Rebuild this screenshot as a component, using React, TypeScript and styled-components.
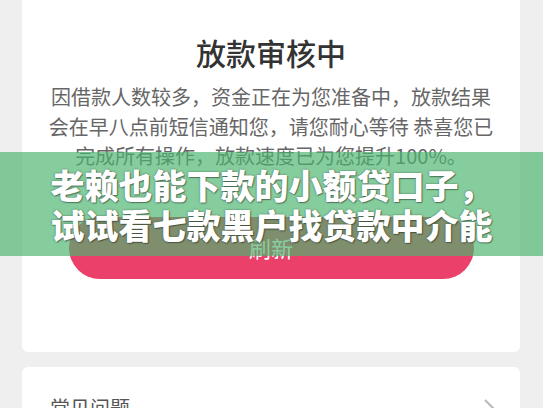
import styled, { createGlobalStyle } from 'styled-components';

const GlobalStyle = createGlobalStyle`
  body {
    margin: 0;
    background: #efefef;
    font-family: "Noto Sans CJK SC", "Noto Sans", sans-serif;
    overflow: hidden;
  }
`

const Page = styled.div`
  position: relative;
  width: 543px;
  height: 408px;
  padding: 0 23px 0 22px;
  box-sizing: border-box;
  overflow: hidden;
`

const Card = styled.div`
  background: #fff;
  border-radius: 6px;
`

const StatusCard = styled(Card)`
  margin-top: -20px;
  padding: 51px 24px 73px;
  display: flex;
  flex-direction: column;
  align-items: center;
`

const Title = styled.h1`
  margin: 0;
  font-size: 30px;
  line-height: 42px;
  font-weight: 500;
  color: #333;
`

const Desc = styled.p`
  margin: 9px 0 0;
  max-width: 450px;
  font-size: 20px;
  line-height: 29.5px;
  color: #666;
  text-align: center;
`

const RefreshButton = styled.button`
  margin-top: 46px;
  width: 405px;
  height: 62px;
  border: none;
  border-radius: 31px;
  background: #ea406a;
  color: #fff;
  font-family: inherit;
  font-size: 22px;
  padding: 0 0 2px;
`

const FaqCard = styled(Card)`
  margin-top: 15px;
  padding: 27px 25px 30px 28px;
  display: flex;
  align-items: center;
  justify-content: space-between;
`

const FaqLabel = styled.span`
  font-size: 20px;
  line-height: 28px;
  color: #555;
`

const Banner = styled.div`
  position: absolute;
  left: 0;
  right: 0;
  top: 152px;
  height: 104px;
  background: rgba(74, 181, 110, 0.67);
  display: flex;
  align-items: center;
  justify-content: center;
`

const BannerText = styled.div`
  max-width: 450px;
  margin-top: 2px;
  font-size: 34px;
  line-height: 40px;
  font-weight: 900;
  color: #fff;
  text-align: center;
  text-shadow: 0 0 2px rgba(40, 60, 40, 0.7), 1px 1px 1px rgba(0, 0, 0, 0.35);
`

function Chevron() {
  return (
    <svg width="12" height="20" viewBox="0 0 12 20">
      <path d="M2 2 L10 10 L2 18" fill="none" stroke="#bbb" strokeWidth="2.2" />
    </svg>
  );
}

export default function App() {
  return (
    <>
      <GlobalStyle />
      <Page>
        <StatusCard>
          <Title>放款审核中</Title>
          <Desc>
            因借款人数较多，资金正在为您准备中，放款结果会在早八点前短信通知您，请您耐心等待 恭喜您已完成所有操作，放款速度已为您提升100%。
          </Desc>
          <RefreshButton>刷新</RefreshButton>
        </StatusCard>
        <FaqCard>
          <FaqLabel>常见问题</FaqLabel>
          <Chevron />
        </FaqCard>
        <Banner>
          <BannerText>老赖也能下款的小额贷口子，试试看七款黑户找贷款中介能</BannerText>
        </Banner>
      </Page>
    </>
  );
}
